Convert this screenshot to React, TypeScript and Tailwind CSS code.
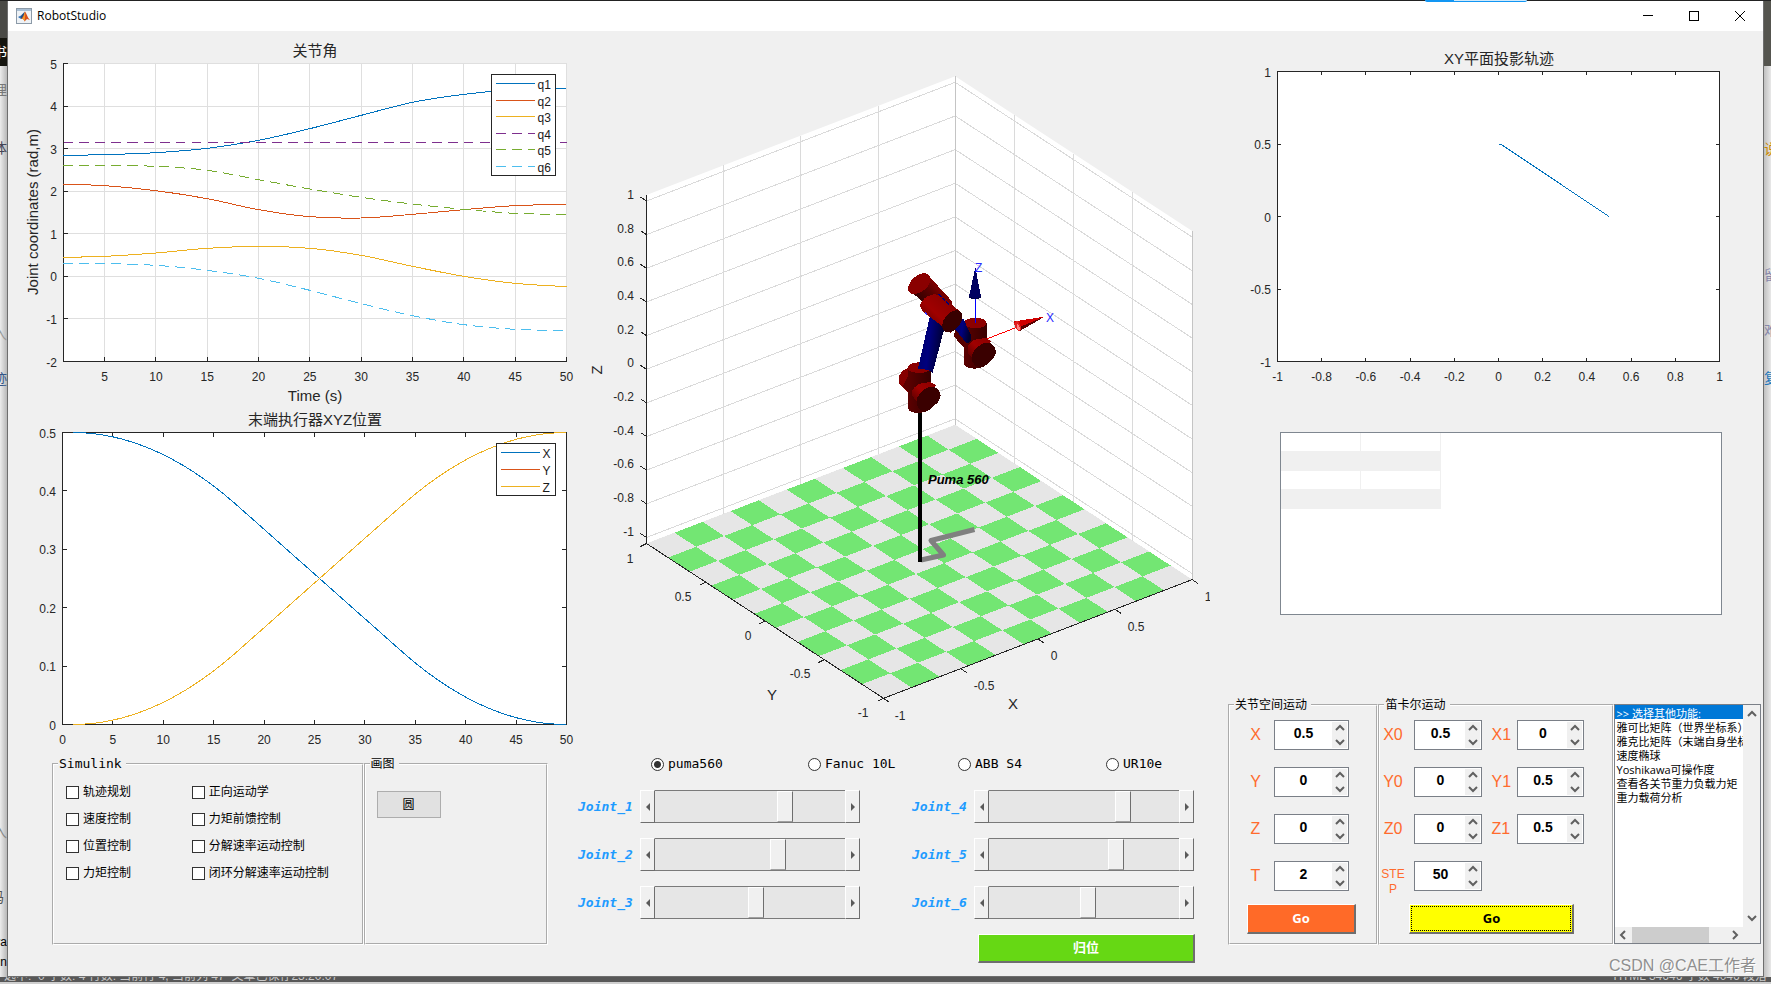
import { useState } from 'react';
import type { ReactNode } from 'react';

type Point = [number, number];

const AXIS = '#262626';
const BLUE = '#0072bd';
const ORANGE = '#d95319';
const YELLOW = '#edb120';

const range = (n: number) => Array.from({ length: n }, (_, i) => i);

function smoothPath(points: Point[]) {
  let d = `M${points[0][0]} ${points[0][1]}`;
  for (let i = 0; i < points.length - 1; i++) {
    const p0 = points[Math.max(0, i - 1)];
    const p1 = points[i];
    const p2 = points[i + 1];
    const p3 = points[Math.min(points.length - 1, i + 2)];
    d += ` C${p1[0] + (p2[0] - p0[0]) / 6} ${p1[1] + (p2[1] - p0[1]) / 6} ${p2[0] - (p3[0] - p1[0]) / 6} ${p2[1] - (p3[1] - p1[1]) / 6} ${p2[0]} ${p2[1]}`;
  }
  return d;
}

interface LabelProps {
  x: number;
  y: number;
  anchor?: 'start' | 'middle' | 'end';
  children: ReactNode;
}

function Tick({ x, y, anchor = 'middle', children }: LabelProps) {
  return (
    <text x={x} y={y + 4} textAnchor={anchor} className="text-[12px]" fill={AXIS}>
      {children}
    </text>
  );
}

function Caption({ x, y, children }: LabelProps) {
  return (
    <text x={x} y={y + 5} textAnchor="middle" className="text-[15px]" fill={AXIS}>
      {children}
    </text>
  );
}

interface LegendEntry {
  name: string;
  color: string;
  dash?: string;
}

function Legend({ x, y, width, height, entries }: { x: number; y: number; width: number; height: number; entries: LegendEntry[] }) {
  const step = (height - 18) / (entries.length - 1);
  return (
    <g>
      <rect x={x} y={y} width={width} height={height} fill="#fff" stroke={AXIS} shapeRendering="crispEdges" />
      {entries.map((e, i) => {
        const ly = Math.floor(y + 9 + i * step) + 0.5;
        return (
          <g key={e.name}>
            <line x1={x + 4} x2={x + 43} y1={ly} y2={ly} stroke={e.color} strokeDasharray={e.dash} shapeRendering="crispEdges" />
            <text x={x + 46} y={ly + 5} className="text-[12px]" fill="#1a1a1a">
              {e.name}
            </text>
          </g>
        );
      })}
    </g>
  );
}

const jointSeries: (LegendEntry & { ys: number[] })[] = [
  { name: 'q1', color: BLUE, ys: [466, 464, 458, 445, 421, 386, 346, 307, 283, 269, 265] },
  { name: 'q2', color: ORANGE, ys: [553, 557, 572, 596, 629, 650, 654, 643, 629, 617, 613] },
  { name: 'q3', color: YELLOW, ys: [772, 769, 759, 745, 739, 745, 766, 799, 829, 850, 860] },
  { name: 'q4', color: '#7e2f8e', dash: '10 6', ys: [427, 427, 427, 427, 427, 427, 427, 427, 427, 427, 427] },
  { name: 'q5', color: '#77ac30', dash: '10 6', ys: [496, 496, 499, 511, 539, 567, 592, 612, 628, 640, 643] },
  { name: 'q6', color: '#4dbeee', dash: '10 6', ys: [790, 791, 796, 811, 835, 871, 911, 947, 974, 988, 991] },
];
const jointSamples = [1, 5, 10, 15, 20, 25, 30, 35, 40, 45, 50];

function JointChart() {
  const px = (t: number) => 63.5 + ((t - 1) * 503) / 49;
  const py = (v: number) => 361.5 - ((v + 2) * 298) / 7;
  return (
    <svg viewBox="8 31 562 381" className="block h-auto w-full overflow-visible" role="img" aria-label="关节角">
      <rect x={63.5} y={63.5} width={503} height={298} fill="#fff" />
      <g stroke="#dfdfdf" shapeRendering="crispEdges">
        {range(10).map((i) => (
          <line key={i} x1={px(5 * (i + 1))} x2={px(5 * (i + 1))} y1={63.5} y2={361.5} />
        ))}
        {range(7).map((i) => (
          <line key={i} x1={63.5} x2={566.5} y1={py(i - 1)} y2={py(i - 1)} />
        ))}
      </g>
      <g stroke={AXIS} fill="none" shapeRendering="crispEdges">
        <path d="M63.5 63V361.5H567" />
        {range(10).map((i) => (
          <line key={i} x1={px(5 * (i + 1))} x2={px(5 * (i + 1))} y1={357} y2={361.5} />
        ))}
        {range(8).map((i) => (
          <line key={i} x1={63.5} x2={68} y1={py(i - 2)} y2={py(i - 2)} />
        ))}
      </g>
      {range(10).map((i) => (
        <Tick key={i} x={px(5 * (i + 1))} y={377}>
          {5 * (i + 1)}
        </Tick>
      ))}
      {range(8).map((i) => (
        <Tick key={i} x={57} y={py(i - 2) + 1} anchor="end">
          {i - 2}
        </Tick>
      ))}
      <Caption x={315} y={51}>关节角</Caption>
      <Caption x={315} y={396}>Time (s)</Caption>
      <text transform="translate(38 212) rotate(-90)" textAnchor="middle" className="text-[15px]" fill={AXIS}>
        Joint coordinates (rad,m)
      </text>
      <g fill="none" shapeRendering="crispEdges">
        {jointSeries.map((s) => (
          <path key={s.name} d={smoothPath(s.ys.map((y, i): Point => [px(jointSamples[i]), y / 3]))} stroke={s.color} strokeDasharray={s.dash} />
        ))}
      </g>
      <Legend x={491.5} y={74.5} width={64} height={101} entries={jointSeries} />
    </svg>
  );
}

/* Trapezoidal velocity profile from 0.5 down to 0 over 49 steps. */
function blend(t: number) {
  const v = 0.75 / 49;
  const tb = 49 / 3;
  const a = v / tb;
  if (t < tb) return 0.5 - (a * t * t) / 2;
  if (t > 49 - tb) return (a * (49 - t) * (49 - t)) / 2;
  return 0.25 - v * (t - 24.5);
}

function PositionChart() {
  const px = (t: number) => 62.5 + t * 10.08;
  const py = (v: number) => 724.5 - v * 584;
  const line = (f: (t: number) => number) =>
    range(50)
      .map((i) => `${i ? 'L' : 'M'}${px(i + 1)} ${py(f(i))}`)
      .join('');
  return (
    <svg viewBox="8 412 562 344" className="block h-auto w-full overflow-visible" role="img" aria-label="末端执行器XYZ位置">
      <g stroke={AXIS} shapeRendering="crispEdges">
        <rect x={62.5} y={432.5} width={504} height={292} fill="#fff" />
        {range(9).map((i) => (
          <path key={i} d={`M${px(5 * i + 5)} 724V720M${px(5 * i + 5)} 433V437`} />
        ))}
        {range(4).map((i) => (
          <path key={i} d={`M63 ${py((i + 1) / 10)}H67M566 ${py((i + 1) / 10)}H562`} />
        ))}
      </g>
      {range(11).map((i) => (
        <Tick key={i} x={px(5 * i)} y={740}>
          {5 * i}
        </Tick>
      ))}
      {range(6).map((i) => (
        <Tick key={i} x={56} y={py(i / 10) + 1} anchor="end">
          {i / 10}
        </Tick>
      ))}
      <Caption x={315} y={420}>末端执行器XYZ位置</Caption>
      <g fill="none" shapeRendering="crispEdges">
        <path d={line(blend)} stroke={BLUE} />
        <path d={line((t) => 0.5 - blend(t))} stroke={YELLOW} />
      </g>
      <Legend
        x={496.5}
        y={443.5}
        width={59}
        height={52}
        entries={[
          { name: 'X', color: BLUE },
          { name: 'Y', color: ORANGE },
          { name: 'Z', color: YELLOW },
        ]}
      />
    </svg>
  );
}

function ProjectionChart() {
  const px = (v: number) => 1277.5 + (v + 1) * 221;
  const py = (v: number) => 361.5 - (v + 1) * 145;
  return (
    <svg viewBox="1210 31 553 401" className="block h-auto w-full" role="img" aria-label="XY平面投影轨迹">
      <g stroke={AXIS} shapeRendering="crispEdges">
        <rect x={1277.5} y={71.5} width={442} height={290} fill="#fff" />
        {range(9).map((i) => (
          <path key={i} d={`M${px((i - 4) / 5)} 361V358M${px((i - 4) / 5)} 72V75`} />
        ))}
        {range(3).map((i) => (
          <path key={i} d={`M1278 ${py((i - 1) / 2)}H1281M1719 ${py((i - 1) / 2)}H1716`} />
        ))}
      </g>
      {range(11).map((i) => (
        <Tick key={i} x={px((i - 5) / 5)} y={377}>
          {(i - 5) / 5}
        </Tick>
      ))}
      {range(5).map((i) => (
        <Tick key={i} x={1271} y={py((i - 2) / 2) + 1} anchor="end">
          {(i - 2) / 2}
        </Tick>
      ))}
      <Caption x={1499} y={59}>XY平面投影轨迹</Caption>
      <path d={`M${px(0)} ${py(0.5)}h2L${px(0.5)} ${py(0)}`} fill="none" stroke={BLUE} shapeRendering="crispEdges" />
    </svg>
  );
}

/* Corners of the isometric work cell. */
const LEFT: Point = [646.5, 543.5];
const ALONG_X: Point = [308.7, -118.7];
const ALONG_Y: Point = [237, 154.8];

function floorPoint(u: number, v: number): Point {
  return [LEFT[0] + ALONG_X[0] * u + ALONG_Y[0] * v, LEFT[1] + ALONG_X[1] * u + ALONG_Y[1] * v];
}

function Robot() {
  return (
    <g transform="translate(880 240) scale(0.33333)" shapeRendering="crispEdges">
      <defs>
        <linearGradient id="redUpright" x1="0" x2="1" y1="0" y2="0">
          <stop offset="0" stopColor="#5c0000" />
          <stop offset="0.45" stopColor="#4a0000" />
          <stop offset="1" stopColor="#360000" />
        </linearGradient>
        <linearGradient id="redTilt" x1="0" x2="1" y1="1" y2="0">
          <stop offset="0.1" stopColor="#5a0000" />
          <stop offset="0.45" stopColor="#a00000" />
          <stop offset="0.7" stopColor="#900000" />
          <stop offset="1" stopColor="#500000" />
        </linearGradient>
        <linearGradient id="redUpper" gradientUnits="userSpaceOnUse" x1="130" x2="185" y1="185" y2="135">
          <stop offset="0" stopColor="#3a0000" />
          <stop offset="0.5" stopColor="#5a0000" />
          <stop offset="1" stopColor="#8c0000" />
        </linearGradient>
        <linearGradient id="redFront" x1="0" x2="1" y1="1" y2="0">
          <stop offset="0" stopColor="#4a0000" />
          <stop offset="0.5" stopColor="#a00000" />
          <stop offset="1" stopColor="#8a0000" />
        </linearGradient>
        <linearGradient id="blueLink" x1="0" x2="1" y1="0" y2="0.25">
          <stop offset="0" stopColor="#000066" />
          <stop offset="0.5" stopColor="#00007e" />
          <stop offset="1" stopColor="#000030" />
        </linearGradient>
      </defs>

      {/* wrist */}
      <path d="M286 178V236" stroke="#0000ff" strokeWidth="3" />
      <path d="M224 270L262 262V328L240 312L223 290Z" fill="#560000" />
      <path d="M252 250V374Q258 386 286 386Q314 384 320 370V250Z" fill="url(#redUpright)" />
      <ellipse cx="286" cy="249" rx="34" ry="16" fill="#8c0000" />
      <path d="M286 228V250" stroke="#0000ff" strokeWidth="3" />
      <path d="M226 244L250 236L272 284L273 300Q268 314 258 308L226 268Z" fill="url(#blueLink)" />
      <path d="M264 318Q274 300 290 298L318 294L334 304L288 366L264 340Z" fill="url(#redFront)" />
      <path d="M276 362Q272 340 292 322Q310 306 328 308Q346 316 348 336Q346 352 332 362L318 376Q300 384 284 376Z" fill="#3a0000" />

      {/* base */}
      <path d="M92 384Q70 384 58 406Q52 426 62 436L84 456L100 420Z" fill="#860000" />
      <path d="M68 440L86 404V456Z" fill="#5c0000" />
      <path d="M84 384V506Q92 520 118 519Q146 516 153 502V384Z" fill="url(#redUpright)" />
      <ellipse cx="118" cy="383" rx="35" ry="16" fill="#8c0000" />
      <path d="M152 218L194 262L158 398Q142 386 114 386Z" fill="url(#blueLink)" />
      <path d="M97 452Q108 432 126 430L152 426L168 436L120 496L97 468Z" fill="url(#redFront)" />
      <path d="M110 494Q106 472 126 454Q144 438 162 440Q180 448 182 466Q180 484 166 494L152 508Q134 514 118 508Z" fill="#3a0000" />

      {/* elbow and shoulder */}
      <path d="M145 106L216 184L218 206L190 214L124 182L94 156Z" fill="url(#redUpper)" />
      <ellipse cx="118" cy="131" rx="39" ry="24" transform="rotate(-40 118 131)" fill="#8a0000" />
      <path d="M120 196Q128 170 160 163L178 164L240 214L212 278L128 214Z" fill="url(#redTilt)" />
      <path d="M176 162L208 194" stroke="#000078" strokeWidth="5" strokeDasharray="12 4" />
      <path d="M134 218L142 224" stroke="#3030ff" strokeWidth="4" />
      <ellipse cx="217" cy="244" rx="38" ry="24" transform="rotate(-50 217 244)" fill="#380000" />

      {/* tool frame */}
      <path d="M286 82L303 170Q286 180 267 170Z" fill="#000060" />
      <path d="M267 168Q286 182 303 168V174Q286 180 267 174Z" fill="#000048" />
      <path d="M322 296L408 263" stroke="#ff0000" strokeWidth="3" />
      <path d="M494 230L418 274Q402 268 403 244Z" fill="#d00000" />
      <path d="M494 230L418 274L422 260Z" fill="#5a0000" />
      <ellipse cx="413" cy="258" rx="8" ry="15" transform="rotate(-22 413 258)" fill="#e02020" />
      <ellipse cx="415" cy="262" rx="4" ry="9" transform="rotate(-22 415 262)" fill="#ff8080" />
    </g>
  );
}

function WorkCell() {
  const near = floorPoint(0, 1);
  const back = floorPoint(1, 0);
  const right = floorPoint(1, 1);
  const wall = 348.5;
  return (
    <svg viewBox="570 31 640 719" className="block h-auto w-full" role="img" aria-label="Puma 560">
      <path d={`M${LEFT[0]} ${LEFT[1]}L${back[0]} ${back[1]}L${right[0]} ${right[1]}V${right[1] - wall}L${back[0]} ${back[1] - wall}L${LEFT[0]} ${LEFT[1] - wall}Z`} fill="#fff" />
      <g stroke="#dadada" shapeRendering="crispEdges" fill="none">
        {range(11).map((i) => {
          const dy = 6 + i * 33.65;
          return <path key={i} d={`M${LEFT[0]} ${LEFT[1] - dy}L${back[0]} ${back[1] - dy}L${right[0]} ${right[1] - dy}`} />;
        })}
        {range(3).map((i) => {
          const p = floorPoint((i + 1) / 4, 0);
          const q = floorPoint(1, (i + 1) / 4);
          return <path key={i} d={`M${p[0]} ${p[1]}v${-wall}M${q[0]} ${q[1]}v${-wall}`} />;
        })}
        <path d={`M${back[0]} ${back[1]}v${-wall}M${right[0]} ${right[1]}v${-wall}`} stroke="#c4c4c4" />
      </g>
      <g shapeRendering="crispEdges">
        {range(121).map((k) => {
          const i = k % 11;
          const j = Math.floor(k / 11);
          const pts = [floorPoint(i / 11, j / 11), floorPoint((i + 1) / 11, j / 11), floorPoint((i + 1) / 11, (j + 1) / 11), floorPoint(i / 11, (j + 1) / 11)];
          return <polygon key={k} points={pts.map((p) => p.join(',')).join(' ')} fill={(i + j) % 2 ? '#73e673' : '#e6e6e6'} />;
        })}
      </g>
      <g stroke={AXIS} fill="none" shapeRendering="crispEdges">
        <path d={`M${LEFT[0]} ${LEFT[1] - wall}V${LEFT[1]}L${near[0]} ${near[1]}L${right[0]} ${right[1]}`} />
        {range(11).map((i) => (
          <path key={i} d={`M${LEFT[0]} ${LEFT[1] - 6 - i * 33.65}l-6 -4`} />
        ))}
        {range(5).map((i) => {
          const p = floorPoint(0, i / 4);
          const q = floorPoint(i / 4, 1);
          return <path key={i} d={`M${p[0]} ${p[1]}l-6 3M${q[0]} ${q[1]}l6 4`} />;
        })}
      </g>
      {range(11).map((i) => (
        <Tick key={i} x={634} y={195 + i * 33.65} anchor="end">
          {(5 - i) / 5}
        </Tick>
      ))}
      <Tick x={630} y={559}>1</Tick>
      <Tick x={683} y={597}>0.5</Tick>
      <Tick x={748} y={636}>0</Tick>
      <Tick x={800} y={674}>-0.5</Tick>
      <Tick x={863} y={713}>-1</Tick>
      <Tick x={900} y={716}>-1</Tick>
      <Tick x={984} y={686}>-0.5</Tick>
      <Tick x={1054} y={656}>0</Tick>
      <Tick x={1136} y={627}>0.5</Tick>
      <Tick x={1208} y={597}>1</Tick>
      <Caption x={772} y={695}>Y</Caption>
      <Caption x={1013} y={704}>X</Caption>
      <text transform="translate(602 370) rotate(-90)" textAnchor="middle" className="text-[15px]" fill={AXIS}>
        Z
      </text>
      <path d="M921 560L943.5 555L931 540.5L974.5 529.5" fill="none" stroke="#808080" strokeWidth="5" strokeLinejoin="round" />
      <path d="M920 405V562" stroke="#000" strokeWidth="4" shapeRendering="crispEdges" />
      <text x={928} y={484} className="text-[13px] font-bold italic" fill="#000">
        Puma 560
      </text>
      <Robot />
      <text x={975} y={272} className="text-[12px]" fill="#2a2aff">
        Z
      </text>
      <text x={1046} y={322} className="text-[12px]" fill="#2a2aff">
        X
      </text>
    </svg>
  );
}

function Panel({ title, className, children }: { title: string; className: string; children: ReactNode }) {
  return (
    <fieldset className={`min-w-0 [border:2px_groove_#ffffff] ${className}`}>
      <legend className="ml-1 pr-1 pl-px leading-4">{title}</legend>
      {children}
    </fieldset>
  );
}

const checks = ['轨迹规划', '正向运动学', '速度控制', '力矩前馈控制', '位置控制', '分解速率运动控制', '力矩控制', '闭环分解速率运动控制'];

function SimulinkPanels() {
  return (
    <div className="mr-[22px] ml-[44px] flex">
      <Panel title="Simulink" className="h-[189px] flex-[312] [font-family:'DejaVu_Sans_Mono','Noto_Sans_CJK_SC',monospace] text-[13px]">
        <div className="grid grid-cols-[126fr_170fr] gap-y-[11px] pt-3 pl-3 text-[12px]">
          {checks.map((c) => (
            <label key={c} className="flex h-4 items-center gap-1 whitespace-nowrap">
              <input type="checkbox" className="size-[13px] shrink-0 appearance-none border border-[#333] bg-white checked:bg-[#333]" />
              {c}
            </label>
          ))}
        </div>
      </Panel>
      <Panel title="画图" className="h-[189px] flex-[183] text-[12px]">
        <button type="button" className="mt-[19px] ml-[11px] h-[27px] w-16 border border-[#adadad] bg-[#e1e1e1]">
          圆
        </button>
      </Panel>
    </div>
  );
}

const bevel = 'border-t border-l border-r-2 border-b-2 border-t-white border-l-white border-r-[#6e6e6e] border-b-[#6e6e6e]';

function JointSlider({ name, initial }: { name: string; initial: number }) {
  const [value, setValue] = useState(initial);
  const arrow =
    'flex w-[15px] shrink-0 items-center justify-center border border-t-white border-l-white border-r-[#6e6e6e] border-b-[#6e6e6e] bg-[#f0f0f0]';
  return (
    <div className="flex h-[33px] items-center">
      <label htmlFor={name} className="w-[62px] shrink-0 [font-family:'DejaVu_Sans_Mono',monospace] text-[13px] font-bold text-[#1e9bff] italic">
        {name}
      </label>
      <div className="flex h-full min-w-0 flex-1">
        <button type="button" aria-label={`${name} −`} className={arrow} onClick={() => setValue(Math.max(0, value - 10))}>
          <svg width="4" height="8" viewBox="0 0 4 8"><path d="M4 0V8L0 4Z" fill="#5a5a5a" /></svg>
        </button>
        <input
          id={name}
          type="range"
          min={0}
          max={1000}
          value={value}
          onChange={(e) => setValue(Number(e.target.value))}
          className="m-0 h-full min-w-0 flex-1 appearance-none border-y border-t-[#7a7a7a] border-b-[#7a7a7a] bg-[#e6e6e6] [&::-webkit-slider-thumb]:h-[31px] [&::-webkit-slider-thumb]:w-4 [&::-webkit-slider-thumb]:appearance-none [&::-webkit-slider-thumb]:border [&::-webkit-slider-thumb]:border-t-white [&::-webkit-slider-thumb]:border-r-[#6e6e6e] [&::-webkit-slider-thumb]:border-b-[#a0a0a0] [&::-webkit-slider-thumb]:border-l-white [&::-webkit-slider-thumb]:bg-[#f0f0f0]"
        />
        <button type="button" aria-label={`${name} +`} className={arrow} onClick={() => setValue(Math.min(1000, value + 10))}>
          <svg width="4" height="8" viewBox="0 0 4 8"><path d="M0 0V8L4 4Z" fill="#5a5a5a" /></svg>
        </button>
      </div>
    </div>
  );
}

const joints: [string, number][] = [
  ['Joint_1', 700],
  ['Joint_4', 722],
  ['Joint_2', 660],
  ['Joint_5', 682],
  ['Joint_3', 535],
  ['Joint_6', 525],
];

function RobotControls() {
  return (
    <>
      <div className="grid h-7 grid-cols-[157fr_150fr_148fr_104fr] items-center pl-[81px] [font-family:'DejaVu_Sans_Mono',monospace] text-[13px]">
        {['puma560', 'Fanuc 10L', 'ABB S4', 'UR10e'].map((r, i) => (
          <label key={r} className="flex items-center gap-1 whitespace-nowrap">
            <input
              type="radio"
              name="robot"
              defaultChecked={i === 0}
              className="size-[13px] shrink-0 appearance-none rounded-full border border-[#333] bg-white checked:[background:radial-gradient(#333_3px,#fff_4px)]"
            />
            {r}
          </label>
        ))}
      </div>
      <div className="mt-3 mr-4 ml-2 grid grid-cols-2 gap-x-[52px] gap-y-[15px]">
        {joints.map(([n, v]) => (
          <JointSlider key={n} name={n} initial={v} />
        ))}
      </div>
      <div className="mt-[15px] mr-[15px] flex justify-end">
        <button type="button" className={`h-[29px] w-[217px] bg-[#66d814] text-[13px] font-bold text-white ${bevel}`}>
          归位
        </button>
      </div>
    </>
  );
}

function Chevron({ dir }: { dir: 'up' | 'down' | 'left' | 'right' }) {
  const d = {
    up: 'M1 7L5 3L9 7',
    down: 'M1 3L5 7L9 3',
    left: 'M7 1L3 5L7 9',
    right: 'M3 1L7 5L3 9',
  }[dir];
  return (
    <svg width="10" height="10" viewBox="0 0 10 10">
      <path d={d} fill="none" stroke="#606060" strokeWidth="2" />
    </svg>
  );
}

function Spinner({ name, initial }: { name: string; initial: string }) {
  const [value, setValue] = useState(initial);
  const bump = (by: number) => setValue(String(Number(value) + by));
  return (
    <div className="flex h-[30px] min-w-0 border border-[#7a7f87] bg-white">
      <input
        id={name}
        type="number"
        value={value}
        onChange={(e) => setValue(e.target.value)}
        className="min-w-0 flex-1 appearance-none pb-1 text-center text-[14px] font-bold text-black outline-none [-moz-appearance:textfield] [&::-webkit-inner-spin-button]:appearance-none"
      />
      <div className="my-px mr-px flex w-[15px] shrink-0 flex-col items-center justify-between bg-[#f0f0f0] py-px">
        <button type="button" aria-label={`${name} +`} onClick={() => bump(1)}>
          <Chevron dir="up" />
        </button>
        <button type="button" aria-label={`${name} −`} onClick={() => bump(-1)}>
          <Chevron dir="down" />
        </button>
      </div>
    </div>
  );
}

function FieldLabel({ name, small = false }: { name: string; small?: boolean }) {
  return (
    <label
      htmlFor={name}
      className={`text-center text-[#ff6b2d] ${small ? 'pt-[6px] text-[12px] leading-[15px] break-all' : 'text-[16px] leading-[30px]'}`}
    >
      {name}
    </label>
  );
}

function MotionPanels() {
  return (
    <>
      <Panel title="关节空间运动" className="h-[248px] flex-[149] text-[12px]">
        <div className="grid auto-rows-[30px] grid-cols-[37px_75px] gap-y-[17px] pt-[7px] pl-[7px]">
          {[['X', '0.5'], ['Y', '0'], ['Z', '0'], ['T', '2']].map(([n, v]) => (
            <div key={n} className="contents">
              <FieldLabel name={n} />
              <Spinner name={n} initial={v} />
            </div>
          ))}
        </div>
        <button type="button" className={`mt-[13px] ml-[17px] block h-[30px] w-[109px] bg-[#ff6a28] [font-family:'Open_Sans',sans-serif] text-[13px] font-bold text-white ${bevel}`}>
          Go
        </button>
      </Panel>
      <Panel title="笛卡尔运动" className="h-[248px] flex-[236] text-[12px]">
        <div className="grid auto-rows-[30px] grid-cols-[25px_68px_17px_67px] gap-x-[9px] gap-y-[17px] pt-[7px]">
          {[['X0', '0.5'], ['X1', '0'], ['Y0', '0'], ['Y1', '0.5'], ['Z0', '0'], ['Z1', '0.5'], ['STEP', '50']].map(([n, v]) => (
            <div key={n} className="contents">
              <FieldLabel name={n} small={n === 'STEP'} />
              <Spinner name={n} initial={v} />
            </div>
          ))}
        </div>
        <button type="button" className={`mt-[13px] ml-[29px] block h-[30px] w-[165px] bg-[#ffff00] p-px [font-family:'Open_Sans',sans-serif] text-[13px] font-bold text-black ${bevel}`}>
          <span className="flex h-full items-center justify-center border border-dotted border-black">Go</span>
        </button>
      </Panel>
    </>
  );
}

const functions = ['>> 选择其他功能:', '雅可比矩阵（世界坐标系）', '雅克比矩阵（末端自身坐标系）', '速度椭球', 'Yoshikawa可操作度', '查看各关节重力负载力矩', '重力载荷分析'];

function FunctionList() {
  return (
    <div className="mt-[7px] flex h-[240px] min-w-0 flex-[147] border border-[#7a7f87] bg-[#f0f0f0]">
      <div className="flex min-w-0 flex-1 flex-col">
        <select
          size={7}
          defaultValue={functions[0]}
          aria-label="选择其他功能"
          className="min-h-0 w-full flex-1 overflow-hidden bg-white p-0 [font-family:'Open_Sans','Noto_Sans_CJK_SC',sans-serif] text-[11px] text-black outline-none"
        >
          {functions.map((f) => (
            <option
              key={f}
              className="h-[14px] min-h-0 overflow-hidden p-0 pl-px leading-[14px] whitespace-nowrap checked:[background:linear-gradient(#0078d7,#0078d7)] checked:[-webkit-text-fill-color:white]"
            >
              {f}
            </option>
          ))}
        </select>
        <div className="flex h-4 shrink-0 items-center justify-between px-[3px]">
          <button type="button" aria-label="向左滚动"><Chevron dir="left" /></button>
          <div className="mr-[21px] ml-1 h-full flex-1 bg-[#cdcdcd]" />
          <button type="button" aria-label="向右滚动"><Chevron dir="right" /></button>
        </div>
      </div>
      <div className="flex w-[17px] shrink-0 flex-col items-center justify-between pt-1 pb-5">
        <button type="button" aria-label="向上滚动" className="leading-none"><Chevron dir="up" /></button>
        <button type="button" aria-label="向下滚动" className="leading-none"><Chevron dir="down" /></button>
      </div>
    </div>
  );
}

function ResultTable() {
  return (
    <div className="mr-[41px] ml-[70px] h-[183px] border border-[#7f8790] bg-white">
      <table className="w-40 table-fixed border-separate border-spacing-0" aria-label="矩阵">
        <tbody>
          {range(4).map((r) => (
            <tr key={r} className={r % 2 ? 'bg-[#f0f0f0]' : 'bg-white'}>
              <td className="h-[19px] border-r border-b border-[#f0f0f0] p-0" />
              <td className="h-[19px] border-r border-b border-[#f0f0f0] p-0" />
            </tr>
          ))}
        </tbody>
      </table>
    </div>
  );
}

function TitleBar() {
  return (
    <header className="flex h-[30px] items-center bg-white pl-2">
      <svg width="16" height="16" viewBox="0 0 16 16" aria-hidden="true">
        <rect x="0.5" y="0.5" width="15" height="15" fill="#eef2f6" stroke="#8c9aa8" />
        <rect x="1" y="1" width="14" height="2" fill="#a9bfd4" />
        <path d="M2 9L5 7.500L7 9L5 11Z" fill="#2f6fb4" />
        <path d="M5 7.500L9 3.500L7.500 9.500L5 11Z" fill="#1d4f86" />
        <path d="M9 3.500C10.500 5 11.500 10 14 12L11 11L8.500 13.500C8 11.500 7 10.500 5 11C7 9.500 8 6 9 3.500Z" fill="#d8501c" />
        <path d="M9 3.500C9.500 6 9 10 8.500 13.500C8 11.500 7 11 6 11C7.500 9 8.500 6 9 3.500Z" fill="#f39a2b" />
      </svg>
      <h1 className="ml-[5px] [font-family:'Open_Sans',sans-serif] text-[12px] text-black">RobotStudio</h1>
      <div className="ml-auto flex">
        <button type="button" aria-label="最小化" className="flex h-[30px] w-[46px] items-center justify-center">
          <svg width="10" height="10" viewBox="0 0 10 10"><path d="M0 4.500H10" stroke="#000" /></svg>
        </button>
        <button type="button" aria-label="最大化" className="flex h-[30px] w-[46px] items-center justify-center">
          <svg width="10" height="10" viewBox="0 0 10 10"><rect x="0.5" y="0.5" width="9" height="9" fill="none" stroke="#000" /></svg>
        </button>
        <button type="button" aria-label="关闭" className="flex h-[30px] w-[46px] items-center justify-center">
          <svg width="10" height="10" viewBox="0 0 10 10"><path d="M0 0L10 10M10 0L0 10" stroke="#000" /></svg>
        </button>
      </div>
    </header>
  );
}

export default function App() {
  return (
    <div className="relative flex min-h-screen flex-col overflow-hidden bg-[#222] pt-px [font-family:'Liberation_Sans','Noto_Sans_CJK_SC',sans-serif] text-[12px] text-black">
      <div className="absolute top-0 right-[244px] z-10 flex h-[2px] w-[102px] rounded-b-sm border-b border-[#1296f3] bg-[#cfe9fb]">
        <div className="w-[29px] bg-[#1296f3]" />
      </div>
      <div className="flex flex-1">
        <div aria-hidden="true" className="relative w-[7px] shrink-0 overflow-hidden bg-linear-to-r from-[#ececec] to-[#b8b8b8] text-[14px] leading-4">
          <div className="h-[37px] bg-[#4a4a46]" />
          <div className="h-7 bg-[#15150f]" />
          <span className="absolute top-[43px] right-0 w-[14px] text-white">书</span>
          <span className="absolute top-[81px] right-0 w-[14px] text-[#777]">理</span>
          <span className="absolute top-[139px] right-0 w-[14px] text-[#445]">体</span>
          <span className="absolute top-[325px] right-0 w-[14px] text-[#999]">入</span>
          <span className="absolute top-[370px] right-0 w-[14px] text-[#358]">迹</span>
          <span className="absolute top-[823px] right-0 w-[14px] text-[#888]">入</span>
          <span className="absolute top-[888px] right-[3px] w-[14px] text-[#555]">码</span>
          <span className="absolute top-[933px] right-0 text-[12px]">va</span>
          <span className="absolute top-[953px] right-0 text-[12px]">un</span>
        </div>
        <main className="relative min-w-0 flex-1 border-x border-b border-[#6e6e6e] bg-[#f0f0f0]">
          <TitleBar />
          <div className="grid grid-cols-[562fr_640fr_553fr]">
            <section className="min-w-0">
              <JointChart />
              <PositionChart />
              <SimulinkPanels />
            </section>
            <section className="min-w-0">
              <WorkCell />
              <RobotControls />
            </section>
            <section className="min-w-0">
              <ProjectionChart />
              <ResultTable />
              <div className="mt-[82px] mr-[2px] ml-[18px] flex items-start">
                <MotionPanels />
                <FunctionList />
              </div>
            </section>
          </div>
          <p className="absolute right-[7px] bottom-0 text-[16px] leading-5 whitespace-nowrap text-[#8f8f8f] [text-shadow:1px_1px_0_#fff]">
            CSDN @CAE工作者
          </p>
        </main>
        <div aria-hidden="true" className="relative w-[7px] shrink-0 overflow-hidden bg-linear-to-r from-[#c0c0c0] to-[#e8e8e8] text-[14px] leading-4">
          <div className="h-[65px] bg-[#55554f]" />
          <span className="absolute top-[140px] left-0 w-[14px] text-[#c80]">说</span>
          <span className="absolute top-[266px] left-0 w-[14px] text-[#88a]">留</span>
          <span className="absolute top-[321px] left-0 w-[14px] text-[#88a]">难</span>
          <span className="absolute top-[369px] left-0 w-[14px] text-[#27b]">复</span>
        </div>
      </div>
      <div aria-hidden="true" className="flex h-[7px] items-end justify-between overflow-hidden border-b-2 border-[#cfcfcf] bg-[#585858] px-1 leading-[11px] whitespace-pre text-[#c9c9c9]">
        <span>选中:  0 字数: 4 行数: 当前行 4, 当前列 47  文章已保存23:20:07</span>
        <span>HTML 34646 字数 4046 段落</span>
      </div>
    </div>
  );
}
